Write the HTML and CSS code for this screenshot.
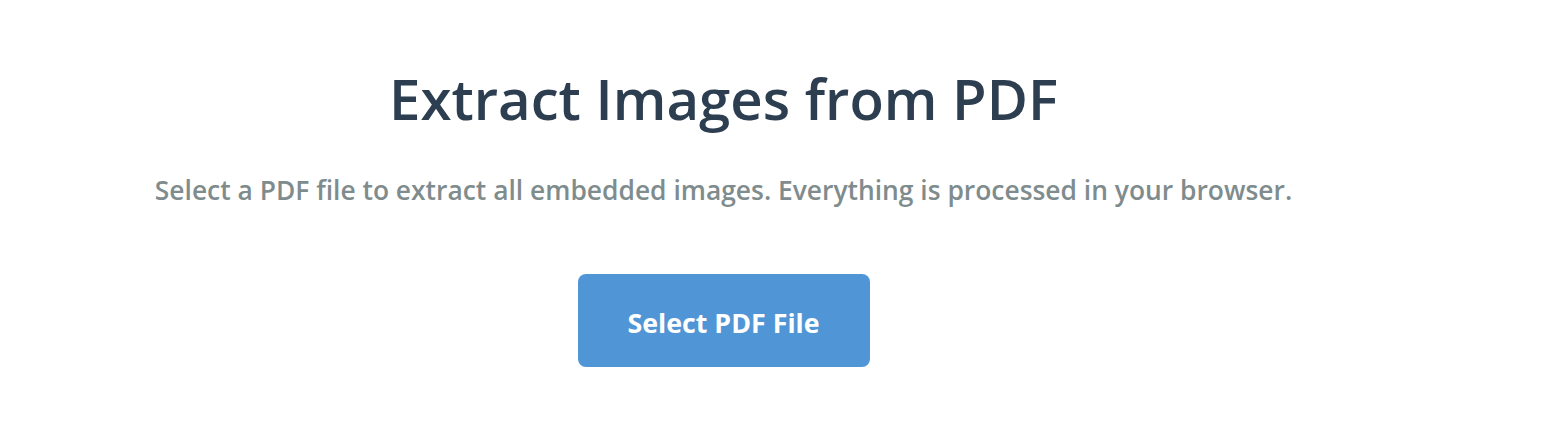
FILE: index.html
```html
<!DOCTYPE html>
<html lang="en">
<head>
<meta charset="utf-8">
<title>Extract Images from PDF</title>
<link rel="stylesheet" href="styles.css">
</head>
<body>
<main class="page">
  <h1 class="title">Extract Images from PDF</h1>
  <p class="subtitle">Select a PDF file to extract all embedded images. Everything is processed in your browser.</p>
  <div class="actions">
    <button class="btn" type="button">Select PDF File</button>
  </div>
</main>
</body>
</html>
```

FILE: styles.css
```css
html, body {
  margin: 0;
  padding: 0;
  background: #ffffff;
}
body {
  font-family: "Open Sans", "Noto Sans", sans-serif;
}
.page {
  width: 1447px;
  display: flex;
  flex-direction: column;
  align-items: center;
  text-align: center;
  padding-top: 62px;
}
.title {
  margin: 0;
  font-size: 56.3px;
  font-weight: 600;
  line-height: 72px;
  color: #2c3e50;
}
.subtitle {
  margin: 40px 0 0;
  font-size: 26.4px;
  font-weight: 600;
  line-height: 32px;
  color: #7f8c8d;
}
.actions {
  margin-top: 68px;
}
.btn {
  width: 292px;
  height: 93px;
  border: none;
  border-radius: 8px;
  background: #5096d6;
  color: #ffffff;
  font-family: "Open Sans", "Noto Sans", sans-serif;
  font-size: 26.8px;
  font-weight: 700;
  padding: 3px 0 0;
  cursor: pointer;
}
```
